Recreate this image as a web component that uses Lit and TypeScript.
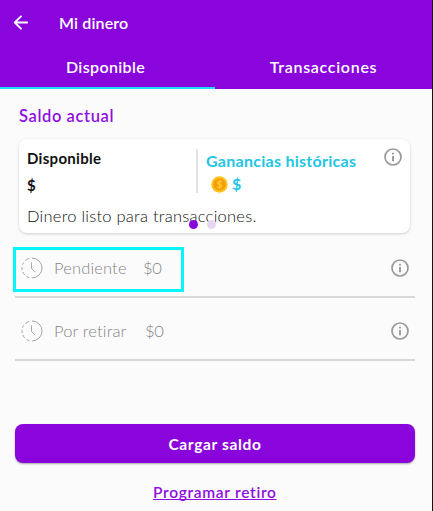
import { LitElement, html, css } from "lit";
import { customElement, property } from "lit/decorators.js";

@customElement("info-icon")
class InfoIcon extends LitElement {
  static styles = css`
    :host { display: block; width: 18px; height: 18px; }
    svg { display: block; }
  `;
  render() {
    return html`<svg width="18" height="18" viewBox="0 0 18 18" fill="none" stroke="#999">
      <circle cx="9" cy="9" r="8" stroke-width="1.7" />
      <path d="M9 7.9V13.2M9 4.8V6.4" stroke-width="1.9" />
    </svg>`;
  }
}

@customElement("balance-row")
class BalanceRow extends LitElement {
  @property() label = "";
  @property() amount = "";
  @property({ type: Boolean, reflect: true }) wide = false;

  static styles = css`
    :host {
      display: flex; align-items: center; box-sizing: border-box; height: 63px;
      margin: 0 17px 0 15px; padding: 5px 6px 0 6px; border-bottom: 2px solid #d8d8d8;
      color: #858585; font-size: 16.5px; font-weight: 300; line-height: 20px;
    }
    svg { display: block; flex: none; }
    .label { width: 89px; margin-left: 11px; letter-spacing: 0.15px; white-space: nowrap; }
    :host([wide]) .label { width: 91px; }
    .amount { flex: 1; letter-spacing: -0.3px; }
  `;
  render() {
    return html`
      <svg width="22" height="22" viewBox="0 0 22 22" fill="none" stroke="#a6a6a6" stroke-width="1">
        <path d="M11 1A10 10 0 0 1 11 21" />
        <path d="M8.3 1.4A10 10 0 0 0 4.3 3.6M2.6 5.5A10 10 0 0 0 1.5 7.8M1 10V13M1.8 15A10 10 0 0 0 3.7 17.9M5.5 19.4A10 10 0 0 0 8.3 20.6" />
        <path d="M10.5 5.5V11.5L14.2 15.1" />
      </svg>
      <span class="label">${this.label}</span>
      <span class="amount">${this.amount}</span>
      <info-icon></info-icon>
    `;
  }
}

@customElement("app-root")
class AppRoot extends LitElement {
  static styles = css`
    :host {
      display: block; box-sizing: border-box; width: 433px; height: 511px; overflow: hidden;
      background: #fbfbfb; border-right: 1px solid #17131c;
      font-family: Lato, "Open Sans", sans-serif; line-height: 20px;
    }
    header { height: 89px; background: #8a05dc; color: #fff; font-size: 16px; font-weight: 600; }
    .bar { display: flex; align-items: center; height: 45px; padding-left: 13px; }
    .bar svg { display: block; }
    .title { margin-left: 30px; letter-spacing: 0.15px; }
    .tabs { display: grid; grid-template-columns: 215px 1fr; height: 44px; text-align: center; }
    .tab { box-sizing: border-box; padding: 12px 4px 0 0; letter-spacing: 0.35px; }
    .tab.second { padding: 12px 0 0; letter-spacing: 0.7px; }
    .tab.active { border-bottom: 2px solid #21dcf5; }
    h2 {
      margin: 17px 0 0 19px; font-size: 16.5px; line-height: 20px; font-weight: 600;
      color: #8f0fe0; letter-spacing: 0.6px;
    }
    .card {
      position: relative; box-sizing: border-box; width: 391px; height: 94px; margin: 13px 0 0 19px;
      border-radius: 8px; background: #fff; box-shadow: 0 1px 3px rgba(0, 0, 0, 0.18);
    }
    .columns { display: flex; padding: 10px 8px 0 8px; height: 55px; box-sizing: border-box; }
    .available { width: 169px; color: #111; font-size: 15px; font-weight: 700; letter-spacing: 0.3px; }
    .available div:first-child { margin-top: -1px; }
    .available div + div { margin-top: 7px; }
    .divider { width: 2px; height: 44px; background: #e3e3e3; }
    .history {
      flex: 1; padding: 2px 0 0 8px; color: #22c5e5; font-size: 16px; font-weight: 700;
      letter-spacing: 0.27px; white-space: nowrap;
    }
    .earned { display: flex; align-items: center; margin: 3px 0 0 5px; gap: 4px; }
    .columns info-icon { margin-top: -1px; }
    .note { margin: 12px 0 0 8px; font-size: 16.5px; font-weight: 300; letter-spacing: 0.24px; color: #111; }
    .dots { position: absolute; left: 170px; top: 81px; display: flex; gap: 9px; }
    .dot { width: 9px; height: 9px; border-radius: 50%; background: #8a05dc; }
    .dot.off { background: #e7d6f1; }
    .rows { position: relative; padding-top: 2px; }
    .focus {
      position: absolute; left: 13px; top: 14px; box-sizing: border-box; width: 171px; height: 45px;
      border: 3px solid #08f5fb;
    }
    .load {
      display: flex; align-items: center; justify-content: center; width: 400px; height: 39px;
      margin: 63px 0 0 15px; padding: 0; border: 0; border-radius: 8px; background: #8a05dc; color: #fff;
      font: 700 15.5px/20px Lato, sans-serif; letter-spacing: 0.65px; box-shadow: 0 1px 2px rgba(0, 0, 0, 0.35);
    }
    .schedule {
      display: block; width: fit-content; margin: 19px 0 0 153px; color: #8f0fe0; font-size: 15.5px;
      font-weight: 600; letter-spacing: 0.7px; text-decoration: underline; text-underline-offset: 1px;
      text-decoration-thickness: 1px; text-decoration-skip-ink: none; white-space: nowrap;
    }
  `;
  render() {
    return html`
      <header>
        <div class="bar">
          <svg width="16" height="16" viewBox="0 0 16 16" fill="none" stroke="#fff" stroke-width="1.8" stroke-linecap="round" stroke-linejoin="round">
            <path d="M14.2 7.5H2M8 1.3L1.7 7.5L8 13.7" />
          </svg>
          <span class="title">Mi dinero</span>
        </div>
        <nav class="tabs">
          <div class="tab active">Disponible</div>
          <div class="tab second">Transacciones</div>
        </nav>
      </header>
      <h2>Saldo actual</h2>
      <section class="card">
        <div class="columns">
          <div class="available"><div>Disponible</div><div>$</div></div>
          <div class="divider"></div>
          <div class="history">
            <div>Ganancias históricas</div>
            <div class="earned">
              <svg width="17" height="17" viewBox="0 0 17 17">
                <circle cx="8.5" cy="8.5" r="8.2" fill="#fcc21b" />
                <circle cx="8.5" cy="8.5" r="6.1" fill="#f59b0b" />
                <path d="M10.8 6.2C9.8 5.3 6.5 5.2 6.5 7C6.5 8.8 10.7 8 10.7 10C10.7 11.8 7.2 11.8 6.1 10.7M8.5 4V13" fill="none" stroke="#fccb2c" stroke-width="1.4" />
              </svg>
              <span>$</span>
            </div>
          </div>
          <info-icon></info-icon>
        </div>
        <div class="note">Dinero listo para transacciones.</div>
        <div class="dots"><span class="dot"></span><span class="dot off"></span></div>
      </section>
      <div class="rows">
        <balance-row label="Pendiente" amount="$0"></balance-row>
        <balance-row label="Por retirar" amount="$0" wide></balance-row>
        <div class="focus"></div>
      </div>
      <button class="load">Cargar saldo</button>
      <a class="schedule">Programar retiro</a>
    `;
  }
}
